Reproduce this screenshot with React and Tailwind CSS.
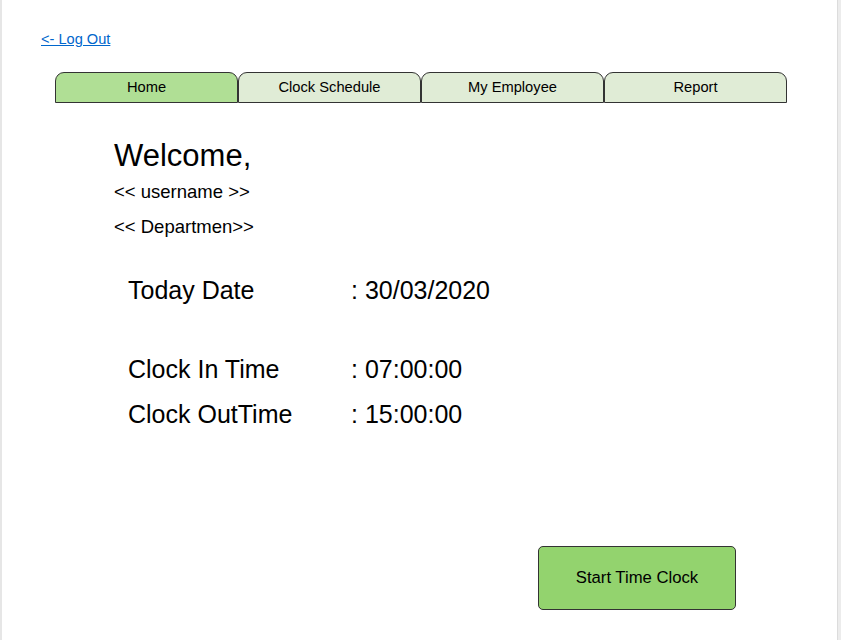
export default function App() {
  const tabs = ['Home', 'Clock Schedule', 'My Employee', 'Report']

  return (
    <div className="flex h-[640px] w-[841px] bg-white font-['Liberation_Sans',Arial,sans-serif] text-black">
      <div className="w-[2px] bg-[#e6e6e6]" />
      <main className="flex-1 pt-[27px]">
        <a href="#" className="ml-[39px] text-[14.6px] leading-[18px] text-[#0066cc] underline">
          &lt;- Log Out
        </a>

        <nav className="ml-[53px] mt-[21px] flex w-[732px]">
          {tabs.map((t, i) => (
            <div
              key={t}
              className={
                'flex h-[31px] flex-1 items-center justify-center rounded-t-[9px] border border-[#333] text-[14.7px] ' +
                (i === 0 ? 'bg-[#b0df95]' : 'bg-[#e0ecd6]')
              }
            >
              {t}
            </div>
          ))}
        </nav>

        <section className="ml-[112px] mt-[35px]">
          <h1 className="text-[31px] leading-[36px]">Welcome,</h1>
          <p className="mt-[7px] text-[18.5px] leading-[22px]">&lt;&lt; username &gt;&gt;</p>
          <p className="mt-[13px] text-[18.5px] leading-[22px]">&lt;&lt; Departmen&gt;&gt;</p>
        </section>

        <section className="ml-[126px] mt-[37px] text-[25px] leading-[30px]">
          <div className="flex">
            <span className="w-[223px]">Today Date</span>
            <span>: 30/03/2020</span>
          </div>
          <div className="mt-[49px] flex">
            <span className="w-[223px]">Clock In Time</span>
            <span>: 07:00:00</span>
          </div>
          <div className="mt-[15px] flex">
            <span className="w-[223px]">Clock OutTime</span>
            <span>: 15:00:00</span>
          </div>
        </section>

        <div className="ml-[536px] mt-[117px]">
          <button className="h-[64px] w-[198px] rounded-[5px] border border-[#333] bg-[#93d36e] text-[16.7px]">
            Start Time Clock
          </button>
        </div>
      </main>
      <div className="w-[4px] border-l border-[#dcdcdc] bg-[#ececec]" />
    </div>
  )
}
